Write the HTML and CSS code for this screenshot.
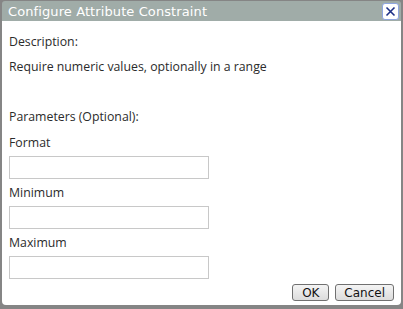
FILE: index.html
```html
<!DOCTYPE html>
<html lang="en">
<head>
  <meta charset="UTF-8" />
  <title>Configure Attribute Constraint</title>
  <link rel="stylesheet" href="styles.css">
</head>
<body>
  <div class="dialog">
    <div class="titlebar">
      <span class="title">Configure Attribute Constraint</span>
      <button class="close-btn" title="Close">
        <svg width="11" height="11" viewBox="0 0 11 11">
          <path d="M1.5 1.5 L9.5 9.5 M9.5 1.5 L1.5 9.5" stroke="#1c2f86" stroke-width="1.6" fill="none"/>
        </svg>
      </button>
    </div>
    <div class="content">
      <p class="label">Description:</p>
      <p class="desc">Require numeric values, optionally in a range</p>
      <p class="section">Parameters (Optional):</p>
      <label for="format">Format</label>
      <input type="text" id="format">
      <label for="minimum">Minimum</label>
      <input type="text" id="minimum">
      <label for="maximum">Maximum</label>
      <input type="text" id="maximum">
      <div class="buttons">
        <button class="btn ok-btn">OK</button>
        <button class="btn">Cancel</button>
      </div>
    </div>
  </div>
</body>
</html>
```

FILE: styles.css
```css
body {
  margin: 0;
  padding: 0;
  background-color: #858585;
  font-family: 'Open Sans', 'Noto Sans', sans-serif;
}
.dialog {
  margin: 1px 2px 0 2px;
  height: 304px;
  display: flex;
  flex-direction: column;
}
.titlebar {
  height: 20px;
  flex-shrink: 0;
  background-color: #a0aca8;
  border-radius: 3px 3px 0 0;
  display: flex;
  align-items: center;
  justify-content: space-between;
  padding: 0 2px 0 6px;
}
.title {
  color: white;
  font-family: 'DejaVu Sans', Verdana, sans-serif;
  font-size: 13px;
  letter-spacing: 0.1px;
}
.close-btn {
  width: 17px;
  height: 17px;
  padding: 0;
  margin: 0;
  background-color: white;
  border: 1px solid #8fa6e0;
  border-radius: 3px;
  display: flex;
  align-items: center;
  justify-content: center;
}
.content {
  flex: 1;
  background-color: white;
  border-radius: 0 0 4px 4px;
  padding: 13px 7px 0 7px;
  display: flex;
  flex-direction: column;
  color: #2b2b2b;
  font-size: 12.3px;
}
.content p {
  margin: 0;
  line-height: 16px;
}
.desc {
  margin-top: 9px !important;
}
.section {
  margin-top: 34px !important;
  margin-bottom: 4px !important;
}
label {
  margin-top: 6px;
  line-height: 16px;
}
input {
  width: 200px;
  height: 23px;
  flex-shrink: 0;
  box-sizing: border-box;
  border: 1px solid #c8c8c8;
  margin-top: 5px;
  padding: 2px 4px;
}
.buttons {
  display: flex;
  justify-content: flex-end;
  gap: 6px;
  margin-top: 5px;
}
.btn {
  height: 17px;
  padding: 0 8px;
  font-family: 'DejaVu Sans', Verdana, sans-serif;
  font-size: 12px;
  color: #111;
  background: linear-gradient(#f4f4f4, #dcdcdc);
  border: 1px solid #707070;
  border-radius: 3px;
  line-height: 14px;
}
.ok-btn {
  width: 37px;
  padding: 0;
}
```
